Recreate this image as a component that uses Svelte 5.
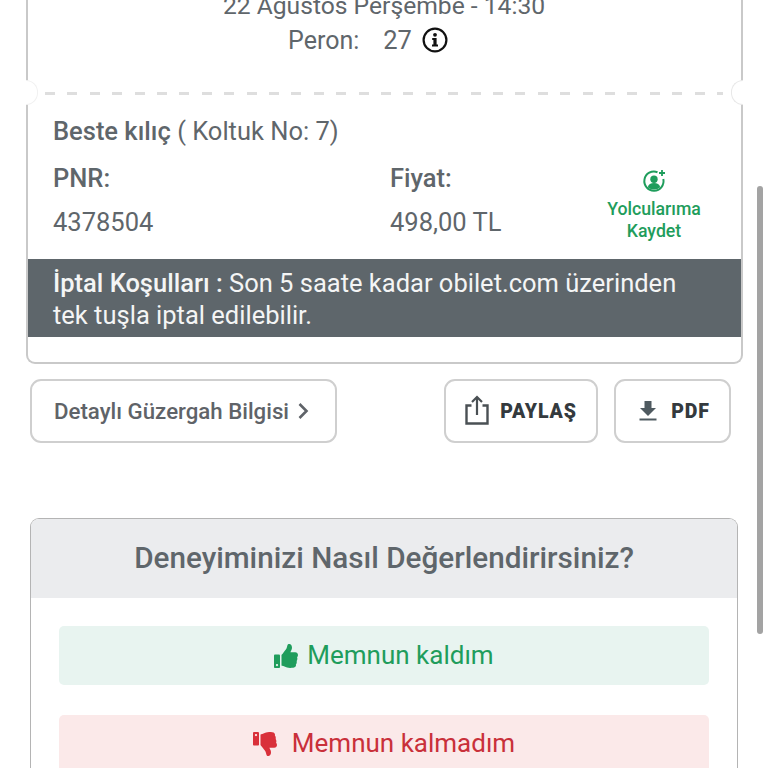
<script>
  const thumb = "M104 224H24c-13.255 0-24 10.745-24 24v240c0 13.255 10.745 24 24 24h80c13.255 0 24-10.745 24-24V248c0-13.255-10.745-24-24-24zM64 472c-13.255 0-24-10.745-24-24s10.745-24 24-24 24 10.745 24 24-10.745 24-24 24zM384 81.452c0 42.416-25.97 66.208-33.277 94.548h101.723c33.397 0 59.397 27.746 59.553 58.098.084 17.938-7.546 37.249-19.439 49.197l-.11.11c9.836 23.337 8.237 56.037-9.308 79.469 8.681 25.895-.069 57.704-16.382 74.757 4.298 17.598 2.244 32.575-6.148 44.632C440.202 511.587 389.616 512 346.839 512l-2.845-.001c-48.287-.017-87.806-17.598-119.56-31.725-15.957-7.099-36.821-15.887-52.651-16.178-6.54-.12-11.783-5.457-11.783-11.998v-213.77c0-3.2 1.282-6.271 3.558-8.521 39.614-39.144 56.648-80.587 89.117-113.111 14.804-14.832 20.188-37.236 25.393-58.902C282.515 39.293 291.817 0 312 0c24 0 72 8 72 81.452z";
</script>

<div class="page">
  <section class="ticket">
    <div class="head">
      <div class="date">22 Ağustos Perşembe - 14:30</div>
      <div class="peron">
        <span class="peron-label">Peron:</span>
        <span class="peron-value">27</span>
        <svg class="info" viewBox="0 0 26 26" aria-hidden="true">
          <circle cx="13" cy="13" r="11.4" fill="none" stroke="#111" stroke-width="2.2" />
          <circle cx="13" cy="7.8" r="1.9" fill="#111" />
          <path d="M10.2 11h4.4v6.6h1.4v2h-6v-2h1.4v-4.6h-1.2z" fill="#111" />
        </svg>
      </div>
    </div>

    <div class="divider">
      <span class="notch left"></span>
      <span class="dash"></span>
      <span class="notch right"></span>
    </div>

    <div class="body">
      <div class="name"><strong>Beste kılıç</strong> ( Koltuk No: 7)</div>
      <div class="info-grid">
        <div class="col pnr">
          <div class="label">PNR:</div>
          <div class="value">4378504</div>
        </div>
        <div class="col price">
          <div class="label">Fiyat:</div>
          <div class="value">498,00 TL</div>
        </div>
        <div class="save">
          <svg class="save-icon" viewBox="0 0 24 24" aria-hidden="true">
            <path d="M15.5 3.2A9.6 9.6 0 1 0 21.3 10" fill="none" stroke="#1f9d5c" stroke-width="2" />
            <path d="M20 1v6M17 4h6" fill="none" stroke="#1f9d5c" stroke-width="1.8" />
            <circle cx="12" cy="10.2" r="3.7" fill="#1f9d5c" />
            <path d="M5.8 18.2c.6-3 3-4.2 6.2-4.2s5.6 1.2 6.2 4.2A8.6 8.6 0 0 1 12 20.6a8.6 8.6 0 0 1-6.2-2.4z" fill="#1f9d5c" />
          </svg>
          <div>Yolcularıma</div>
          <div>Kaydet</div>
        </div>
      </div>
    </div>

    <div class="banner"><strong>İptal Koşulları :</strong> Son 5 saate kadar obilet.com üzerinden tek tuşla iptal edilebilir.</div>
    <div class="foot"></div>
  </section>

  <div class="actions">
    <button class="btn route">Detaylı Güzergah Bilgisi
      <svg class="chev" viewBox="0 0 12 18" aria-hidden="true"><path d="M2.5 2l7 7-7 7" fill="none" stroke="#5f6368" stroke-width="2.6" /></svg>
    </button>
    <span class="spacer"></span>
    <button class="btn share">
      <svg class="share-icon" viewBox="0 0 24 30" aria-hidden="true">
        <path d="M6.5 10.5H1.5v18h21v-18h-5" fill="none" stroke="#4a5054" stroke-width="2.4" />
        <path d="M12 20V2.5M7 7l5-5 5 5" fill="none" stroke="#4a5054" stroke-width="2.2" />
      </svg>
      <span>PAYLAŞ</span>
    </button>
    <button class="btn pdf">
      <svg class="dl-icon" viewBox="0 0 18 20" aria-hidden="true">
        <path d="M5.5 0h7v7H17l-8 8-8-8h4.5z" fill="#4f5a60" />
        <path d="M.5 18.5h17" stroke="#4f5a60" stroke-width="2" />
      </svg>
      <span>PDF</span>
    </button>
  </div>

  <section class="rate">
    <h2>Deneyiminizi Nasıl Değerlendirirsiniz?</h2>
    <div class="rate-body">
      <div class="choice good">
        <svg class="thumb" viewBox="0 0 512 512" aria-hidden="true"><path d={thumb} /></svg>
        <span>Memnun kaldım</span>
      </div>
      <div class="choice bad">
        <svg class="thumb down" viewBox="0 0 512 512" aria-hidden="true"><path d={thumb} /></svg>
        <span>Memnun kalmadım</span>
      </div>
    </div>
  </section>

  <div class="scrollbar"></div>
</div>

<style>
  :global(html), :global(body) { margin: 0; height: 768px; overflow: hidden; background: #fff; }
  .page {
    position: relative;
    width: 768px;
    height: 768px;
    overflow: hidden;
    font-family: Roboto, "Noto Sans", sans-serif;
    color: #5f666b;
    font-size: 25.5px;
    background: #fff;
    box-sizing: border-box;
    padding: 0 25px 0 26px;
  }
  .ticket {
    margin-top: -20px;
    width: 717px;
    border: 2px solid #c9c9c9;
    border-top: 0;
    border-radius: 0 0 9px 9px;
    box-sizing: border-box;
    height: 384px;
    display: flex;
    flex-direction: column;
  }
  .head { height: 112px; text-align: center; box-sizing: border-box; padding-top: 10px; }
  .date { line-height: 32px; font-size: 24.65px; margin-left: -1px; }
  .peron { display: flex; align-items: center; justify-content: center; height: 32px; margin-top: 2px; padding-right: 33px; }
  .peron-label { font-size: 25px; }
  .peron-value { margin-left: 24px; }
  .info { width: 26px; height: 26px; margin-left: 10px; }
  .divider { position: relative; height: 4px; margin: 0 -2px; }
  .dash {
    display: block;
    position: absolute;
    left: 19px;
    right: 20px;
    top: 0;
    height: 3px;
    background: repeating-linear-gradient(90deg, #dedede 0 10px, transparent 10px 22.4px);
  }
  .notch {
    position: absolute;
    top: -12px;
    width: 12px;
    height: 25px;
    background: #fff;
    box-sizing: border-box;
    border: 1px solid #e8e8e8;
  }
  .notch.left { left: 0; border-left: 0; border-radius: 0 13px 13px 0; border-color: #f1f1f1; }
  .notch.right { right: 0; border-right: 0; border-radius: 13px 0 0 13px; }
  .body { padding: 0 24px 0 25px; height: 163px; box-sizing: border-box; }
  .name { padding-top: 18px; line-height: 34px; }
  .name strong { font-weight: 500; }
  .info-grid { display: flex; margin-top: 13px; }
  .col .label { font-weight: 500; line-height: 34px; }
  .col .value { line-height: 34px; margin-top: 10px; }
  .pnr { width: 337px; }
  .price { width: 203px; }
  .save {
    flex: 1;
    padding-top: 8px;
    text-align: center;
    color: #1f9d5c;
    font-size: 17.7px;
    font-weight: 500;
    line-height: 22px;
    margin-left: -2px;
  }
  .save-icon { display: block; width: 24px; height: 24px; margin: 0 0 5px 51px; }
  .banner {
    height: 78px;
    background: #5e666b;
    color: #f4f5f5;
    padding: 8px 50px 0 25px;
    box-sizing: border-box;
    line-height: 32px;
  }
  .banner strong { font-weight: 500; }
  .foot { flex: 1; }
  .actions { display: flex; gap: 16px; margin-top: 15px; padding-left: 4px; width: 701px; }
  .spacer { flex: 1; margin-right: -6px; }
  .btn {
    height: 64px;
    background: #fff;
    border: 2px solid #cfcfcf;
    border-radius: 11px;
    box-sizing: border-box;
    font-family: inherit;
    display: flex;
    align-items: center;
    padding: 0;
  }
  .route { width: 307px; padding-left: 22px; font-size: 22.25px; font-weight: 500; color: #5f6368; gap: 8px; }
  .chev { width: 12px; height: 18px; }
  .share, .pdf { justify-content: center; font-size: 19.5px; font-weight: 900; color: #343a3e; letter-spacing: .9px; }
  .share { width: 154px; gap: 11px; }
  .pdf { width: 117px; gap: 14px; padding-left: 4px; }
  .share-icon { width: 24px; height: 30px; margin-top: -3px; }
  .dl-icon { width: 18px; height: 20px; }
  .rate {
    margin-top: 75px;
    margin-left: 4px;
    width: 708px;
    border: 1.5px solid #b4b4b4;
    border-bottom: 0;
    border-radius: 9px 9px 0 0;
    box-sizing: border-box;
    height: 260px;
  }
  .rate h2 {
    margin: 0;
    height: 79px;
    background: #ebecee;
    border-radius: 8px 8px 0 0;
    font-size: 29.7px;
    font-weight: 500;
    line-height: 77px;
    text-align: center;
    color: #5f666b;
  }
  .rate-body { padding: 28px 28px 0 28px; display: flex; flex-direction: column; gap: 30px; font-size: 26px; }
  .choice {
    height: 59px;
    border-radius: 5px;
    display: flex;
    align-items: center;
    justify-content: center;
  }
  .choice span { position: relative; top: -1px; }
  .good { background: #e8f4f0; color: #1f9d5c; gap: 9px; }
  .bad { background: #fbe9e9; color: #c9303a; gap: 15px; height: 70px; padding-bottom: 12px; box-sizing: border-box; }
  .thumb { width: 24px; height: 24px; fill: #1f9d5c; }
  .thumb.down { fill: #d9303a; transform: scaleY(-1); }
  .scrollbar {
    position: absolute;
    left: 757px;
    top: 186px;
    width: 6px;
    height: 448px;
    border-radius: 3px;
    background: #a3a3a3;
  }
</style>
